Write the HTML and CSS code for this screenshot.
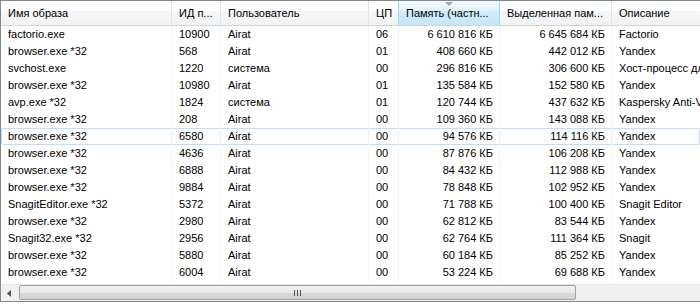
FILE: index.html
```html
<!DOCTYPE html>
<html lang="ru">
<head>
    <meta charset="UTF-8">
    <title>Процессы</title>
    <link rel="stylesheet" href="styles.css">
</head>
<body>
    <div class="list-view">
        <div class="list-header">
            <div class="col c-name">Имя образа</div>
            <div class="col c-pid">ИД п...</div>
            <div class="col c-user">Пользователь</div>
            <div class="col c-cpu">ЦП</div>
            <div class="col c-mem sorted"><span class="sort-arrow"></span>Память (частн...</div>
            <div class="col c-commit">Выделенная пам...</div>
            <div class="col c-desc">Описание</div>
        </div>
        <div class="list-body">
            <div class="row"><div class="col c-name">factorio.exe</div><div class="col c-pid">10900</div><div class="col c-user">Airat</div><div class="col c-cpu">06</div><div class="col c-mem num">6 610 816 КБ</div><div class="col c-commit num">6 645 684 КБ</div><div class="col c-desc">Factorio</div></div>
            <div class="row"><div class="col c-name">browser.exe *32</div><div class="col c-pid">568</div><div class="col c-user">Airat</div><div class="col c-cpu">01</div><div class="col c-mem num">408 660 КБ</div><div class="col c-commit num">442 012 КБ</div><div class="col c-desc">Yandex</div></div>
            <div class="row"><div class="col c-name">svchost.exe</div><div class="col c-pid">1220</div><div class="col c-user">система</div><div class="col c-cpu">00</div><div class="col c-mem num">296 816 КБ</div><div class="col c-commit num">306 600 КБ</div><div class="col c-desc">Хост-процесс для служб Windows</div></div>
            <div class="row"><div class="col c-name">browser.exe *32</div><div class="col c-pid">10980</div><div class="col c-user">Airat</div><div class="col c-cpu">01</div><div class="col c-mem num">135 584 КБ</div><div class="col c-commit num">152 580 КБ</div><div class="col c-desc">Yandex</div></div>
            <div class="row"><div class="col c-name">avp.exe *32</div><div class="col c-pid">1824</div><div class="col c-user">система</div><div class="col c-cpu">01</div><div class="col c-mem num">120 744 КБ</div><div class="col c-commit num">437 632 КБ</div><div class="col c-desc">Kaspersky Anti-Virus</div></div>
            <div class="row"><div class="col c-name">browser.exe *32</div><div class="col c-pid">208</div><div class="col c-user">Airat</div><div class="col c-cpu">00</div><div class="col c-mem num">109 360 КБ</div><div class="col c-commit num">143 088 КБ</div><div class="col c-desc">Yandex</div></div>
            <div class="row focused"><div class="col c-name">browser.exe *32</div><div class="col c-pid">6580</div><div class="col c-user">Airat</div><div class="col c-cpu">00</div><div class="col c-mem num">94 576 КБ</div><div class="col c-commit num">114 116 КБ</div><div class="col c-desc">Yandex</div></div>
            <div class="row"><div class="col c-name">browser.exe *32</div><div class="col c-pid">4636</div><div class="col c-user">Airat</div><div class="col c-cpu">00</div><div class="col c-mem num">87 876 КБ</div><div class="col c-commit num">106 208 КБ</div><div class="col c-desc">Yandex</div></div>
            <div class="row"><div class="col c-name">browser.exe *32</div><div class="col c-pid">6888</div><div class="col c-user">Airat</div><div class="col c-cpu">00</div><div class="col c-mem num">84 432 КБ</div><div class="col c-commit num">112 988 КБ</div><div class="col c-desc">Yandex</div></div>
            <div class="row"><div class="col c-name">browser.exe *32</div><div class="col c-pid">9884</div><div class="col c-user">Airat</div><div class="col c-cpu">00</div><div class="col c-mem num">78 848 КБ</div><div class="col c-commit num">102 952 КБ</div><div class="col c-desc">Yandex</div></div>
            <div class="row"><div class="col c-name">SnagitEditor.exe *32</div><div class="col c-pid">5372</div><div class="col c-user">Airat</div><div class="col c-cpu">00</div><div class="col c-mem num">71 788 КБ</div><div class="col c-commit num">100 400 КБ</div><div class="col c-desc">Snagit Editor</div></div>
            <div class="row"><div class="col c-name">browser.exe *32</div><div class="col c-pid">2980</div><div class="col c-user">Airat</div><div class="col c-cpu">00</div><div class="col c-mem num">62 812 КБ</div><div class="col c-commit num">83 544 КБ</div><div class="col c-desc">Yandex</div></div>
            <div class="row"><div class="col c-name">Snagit32.exe *32</div><div class="col c-pid">2956</div><div class="col c-user">Airat</div><div class="col c-cpu">00</div><div class="col c-mem num">62 764 КБ</div><div class="col c-commit num">111 364 КБ</div><div class="col c-desc">Snagit</div></div>
            <div class="row"><div class="col c-name">browser.exe *32</div><div class="col c-pid">5880</div><div class="col c-user">Airat</div><div class="col c-cpu">00</div><div class="col c-mem num">60 184 КБ</div><div class="col c-commit num">85 252 КБ</div><div class="col c-desc">Yandex</div></div>
            <div class="row"><div class="col c-name">browser.exe *32</div><div class="col c-pid">6004</div><div class="col c-user">Airat</div><div class="col c-cpu">00</div><div class="col c-mem num">53 224 КБ</div><div class="col c-commit num">69 688 КБ</div><div class="col c-desc">Yandex</div></div>
        </div>
        <div class="h-scroll">
            <div class="scroll-btn">
                <svg width="5" height="7" viewBox="0 0 5 7"><path d="M4 0 L0 3.5 L4 7 Z" fill="#4d4d4d"/></svg>
            </div>
            <div class="scroll-track">
                <div class="scroll-thumb"><span class="grip"></span></div>
            </div>
        </div>
    </div>
</body>
</html>
```

FILE: styles.css
```css
html, body {
    margin: 0;
    padding: 0;
    background: #ffffff;
}

.list-view {
    width: 700px;
    height: 302px;
    border-top: 1px solid #828790;
    border-bottom: 1px solid #828790;
    border-left: 1px solid #828790;
    box-sizing: border-box;
    overflow: hidden;
    font-family: "Liberation Sans", Arial, sans-serif;
    font-size: 11px;
    color: #000000;
    display: flex;
    flex-direction: column;
}

.list-header,
.row {
    display: grid;
    grid-template-columns: 171px 49px 148px 30px 101px 112px 140px;
    white-space: nowrap;
}

.list-header {
    height: 24px;
    background: linear-gradient(#ffffff 0%, #ffffff 40%, #f6f7f8 41%, #f1f2f4 100%);
    border-bottom: 1px solid #d5d5d5;
}

.list-header .col {
    line-height: 24px;
    padding-left: 7px;
    border-right: 1px solid #e3e5e8;
    position: relative;
}

.list-header .sorted {
    background: linear-gradient(#f2f9fd 0%, #e1f2fc 40%, #d2ecfa 41%, #c6e5f8 100%);
    border-left: 1px solid #96d9f9;
    border-right: 1px solid #96d9f9;
    margin-left: -1px;
}

.sort-arrow {
    position: absolute;
    top: 1px;
    left: 46px;
    width: 0;
    height: 0;
    border-left: 4px solid transparent;
    border-right: 4px solid transparent;
    border-top: 4px solid #97a5b8;
}

.list-body {
    height: 255px;
    flex: none;
}

.row {
    height: 17px;
}

.row .col {
    line-height: 17px;
    padding-left: 7px;
    padding-right: 7px;
    border-right: 1px solid #f0f2f5;
    overflow: hidden;
}

.row .num {
    text-align: right;
    padding-right: 6px;
}

.row.focused {
    box-shadow: inset 0 0 0 1px #c3ddf6;
    border-radius: 2px;
    background: #fbfdff;
}

.h-scroll {
    margin-top: 3px;
    height: 17px;
    display: flex;
    background: #f0f0f0;
    border-top: 1px solid #e6e6e6;
    box-sizing: border-box;
}

.scroll-btn {
    width: 17px;
    display: flex;
    align-items: center;
    justify-content: center;
}

.scroll-track {
    flex: 1;
    display: flex;
    padding: 0 1px;
}

.scroll-thumb {
    width: 557px;
    height: 15px;
    box-sizing: border-box;
    border: 1px solid #a0a0a0;
    border-radius: 2px;
    background: linear-gradient(#f3f3f3 0%, #e8e8e8 50%, #d9d9d9 51%, #d4d4d4 100%);
    display: flex;
    align-items: center;
    justify-content: center;
}

.grip {
    width: 7px;
    height: 6px;
    background: repeating-linear-gradient(90deg, #4e4e4e 0, #4e4e4e 1px, transparent 1px, transparent 3px);
}
```
